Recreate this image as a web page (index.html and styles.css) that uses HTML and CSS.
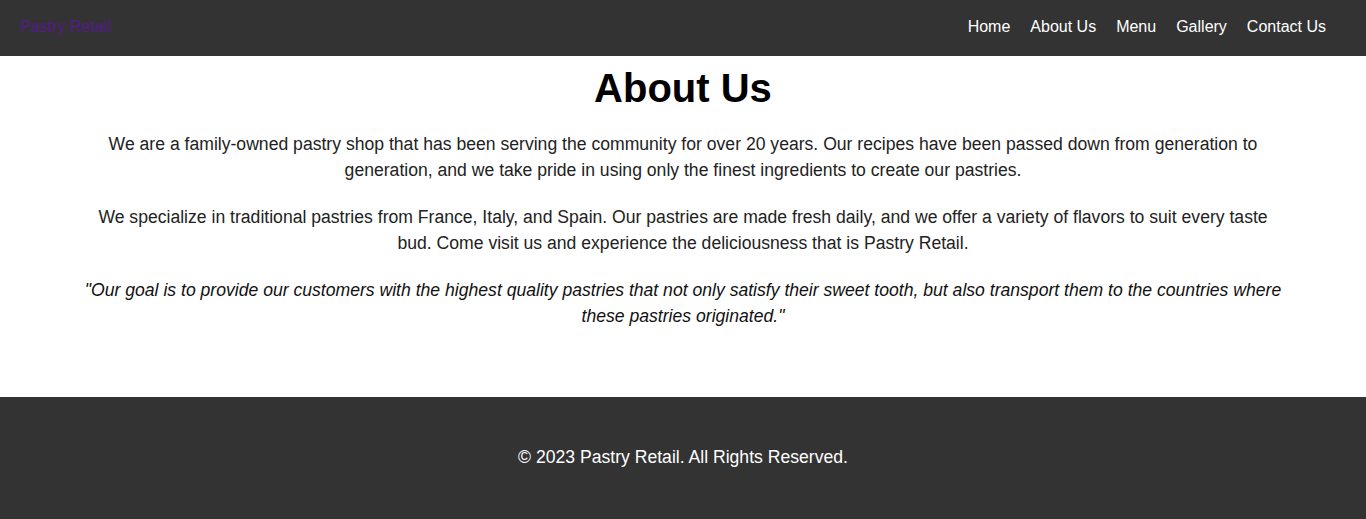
FILE: index.html
```html
<!DOCTYPE html>
<html lang="en">
<head>
<meta charset="utf-8">
<title>Pastry Retail - About Us</title>
<link rel="stylesheet" href="styles.css">
</head>
<body>
<header class="site-header">
  <a class="logo" href="#">Pastry Retail</a>
  <nav class="nav">
    <ul class="nav-list">
      <li><a href="#">Home</a></li>
      <li><a href="#">About Us</a></li>
      <li><a href="#">Menu</a></li>
      <li><a href="#">Gallery</a></li>
      <li><a href="#">Contact Us</a></li>
    </ul>
  </nav>
</header>
<main class="about">
  <h1 class="about-title">About Us</h1>
  <p class="about-text">We are a family-owned pastry shop that has been serving the community for over 20 years. Our recipes have been passed down from generation to generation, and we take pride in using only the finest ingredients to create our pastries.</p>
  <p class="about-text">We specialize in traditional pastries from France, Italy, and Spain. Our pastries are made fresh daily, and we offer a variety of flavors to suit every taste bud. Come visit us and experience the deliciousness that is Pastry Retail.</p>
  <p class="about-text about-quote">"Our goal is to provide our customers with the highest quality pastries that not only satisfy their sweet tooth, but also transport them to the countries where these pastries originated."</p>
</main>
<footer class="site-footer">
  <p class="copyright">&copy; 2023 Pastry Retail. All Rights Reserved.</p>
</footer>
</body>
</html>
```

FILE: styles.css
```css
html, body {
  margin: 0;
  padding: 0;
}

body {
  font-family: "Liberation Sans", Arial, sans-serif;
  background: #fff;
  color: #222;
}

.site-header {
  height: 56px;
  box-sizing: border-box;
  background: #333;
  display: flex;
  justify-content: space-between;
  align-items: flex-start;
  padding: 18px 20px 0 20px;
}

.logo {
  color: #551a8b;
  font-size: 16px;
  text-decoration: none;
}

.nav-list {
  list-style: none;
  margin: 0;
  padding: 0 20px 0 0;
  display: flex;
  gap: 20px;
}

.nav-list a {
  color: #fff;
  font-size: 16px;
  text-decoration: none;
}

.about {
  padding: 10px 80px 48px;
  text-align: center;
}

.about-title {
  margin: 0 0 20px;
  font-size: 40px;
  color: #000;
}

.about-text {
  margin: 0 0 20px;
  font-size: 17.6px;
  line-height: 26.4px;
}

.about-quote {
  font-style: italic;
  color: #111;
}

.site-footer {
  background: #333;
  color: #fff;
  text-align: center;
  padding: 50px 20px 53px;
}

.copyright {
  margin: 0;
  font-size: 17.6px;
  line-height: 21px;
}
```
